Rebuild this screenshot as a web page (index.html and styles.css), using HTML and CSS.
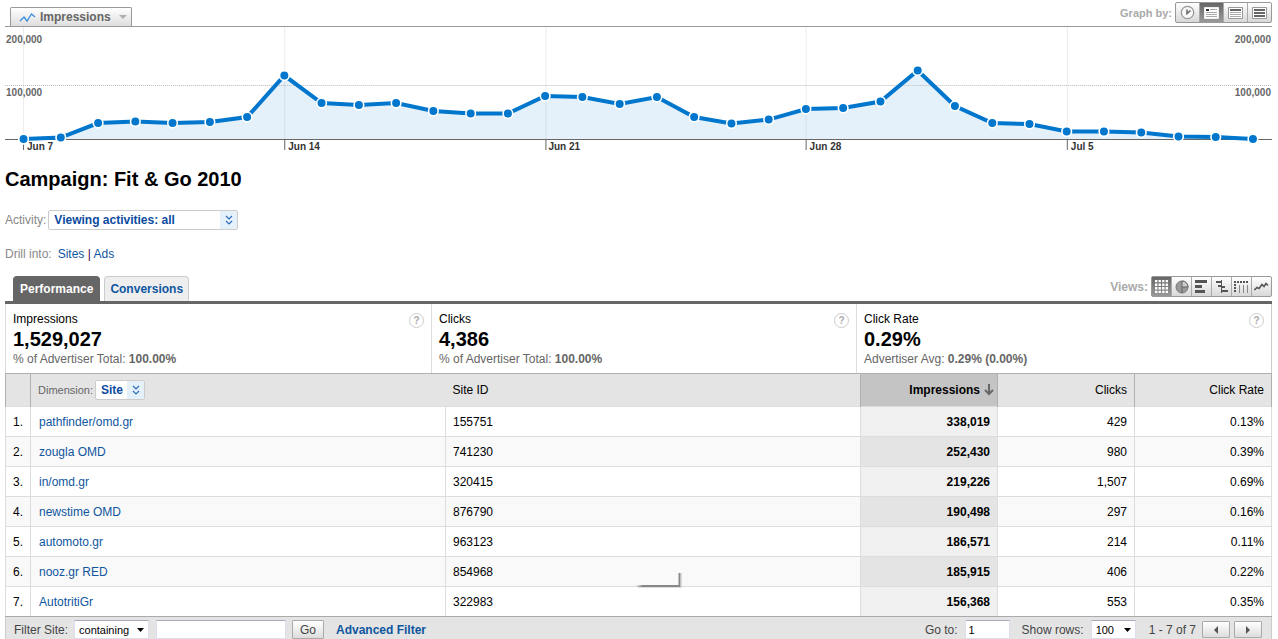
FILE: index.html
```
<!DOCTYPE html>
<html lang="en">
<head>
<meta charset="utf-8">
<title>Campaign: Fit &amp; Go 2010</title>
<link rel="stylesheet" href="styles.css">
</head>
<body>
<svg class="defs" aria-hidden="true">
  <symbol id="chevrons" viewBox="0 0 8 10"><path d="M1 1l3 3 3-3M1 6l3 3 3-3" fill="none" stroke="#2f6bb5" stroke-width="1.2"/></symbol>
  <symbol id="caret" viewBox="0 0 7 4"><path d="M0 0h7L3.500 4z" fill="#000"/></symbol>
</svg>
<div class="page">
  <div class="graph-bar">
    <button class="metric-tab" type="button">
      <svg width="17" height="11" viewBox="0 0 17 11"><path d="M1 9l4-4 3 4 4.500-7L16 5" fill="none" stroke="#3a8fdc" stroke-width="1.300"/></svg>
      Impressions
      <svg class="drop" width="8" height="4" viewBox="0 0 8 4"><path d="M0 0h8L4 4z" fill="#b0b0b0"/></svg>
    </button>
    <div class="tool-group">
      <span class="tool-label graph-label">Graph by:</span>
      <div class="tools graph-tools">
        <button type="button" aria-label="Hour"><svg width="15" height="15" viewBox="0 0 15 15"><circle cx="7.500" cy="7.500" r="6.200" fill="#f8f8f8" stroke="#999" stroke-width="1.300"/><path d="M7 4.500v4l3.500-3" fill="none" stroke="#666" stroke-width="1.500"/></svg></button>
        <button type="button" class="on" aria-label="Day"><svg width="15" height="12" viewBox="0 0 15 12"><path d="M.5.5h14v11H.5z" fill="#fff" stroke="#eee"/><path d="M2 2h3v2H2z" fill="#333"/><path d="M6 2.500h7M2 5.500h11M2 7.500h11M2 9.500h11" stroke="#aaa"/></svg></button>
        <button type="button" aria-label="Week"><svg width="15" height="12" viewBox="0 0 15 12"><path d="M.5.5h14v11H.5z" fill="#fff" stroke="#999"/><path d="M2 3h11" stroke="#666" stroke-width="2"/><path d="M2 5.500h11M2 7.500h11M2 9.500h11" stroke="#aaa"/></svg></button>
        <button type="button" aria-label="Month"><svg width="15" height="12" viewBox="0 0 15 12"><path d="M.5.5h14v11H.5z" fill="#fff" stroke="#999"/><path d="M2 3h11M2 6h11M2 9h11" stroke="#666" stroke-width="2"/></svg></button>
      </div>
    </div>
  </div>

  <svg class="chart" viewBox="5 27 1266 128" role="img" aria-label="Impressions by day">
    <defs>
      <marker id="dot" markerUnits="userSpaceOnUse" markerWidth="12" markerHeight="12" refX="6" refY="6"><circle cx="6" cy="6" r="4.800" fill="#0077cc" stroke="#fff" stroke-width="1.600"/></marker>
    </defs>
    <path class="area" d="M23.500 139L60.700 137.500 98 123 135.200 121.500 172.400 123 209.700 122 246.900 117 284.100 75.500 321.300 103 358.600 105 395.800 103 433 111 470.300 113.500 507.500 113.500 544.700 96 581.900 97 619.200 104 656.400 97 693.600 117 730.900 123.500 768.100 119.500 805.300 109 842.500 108 879.800 101.500 917 70.500 954.200 106 991.500 123 1028.700 124 1065.900 131.500 1103.100 131.500 1140.400 132.500 1177.600 136.500 1214.800 137 1252 139z"/>
    <path class="grid" d="M23.500 27V139M284.500 27V139M545.500 27V139M805.500 27V139M1066.500 27V139"/>
    <path class="dotted" d="M5 85.500H1271"/>
    <path class="axis" d="M5 139.500H1271M23.500 139V150M284.500 139V150M545.500 139V150M805.500 139V150M1066.500 139V150"/>
    <g class="scale">
      <text x="6" y="43">200,000</text><text x="6" y="96">100,000</text>
      <text x="1270" y="43" text-anchor="end">200,000</text><text x="1270" y="96" text-anchor="end">100,000</text>
    </g>
    <g class="dates">
      <text x="27" y="150">Jun 7</text><text x="288" y="150">Jun 14</text><text x="548" y="150">Jun 21</text><text x="809" y="150">Jun 28</text><text x="1070" y="150">Jul 5</text>
    </g>
    <polyline class="series" points="23.500,139 60.700,137.500 98,123 135.200,121.500 172.400,123 209.700,122 246.900,117 284.100,75.500 321.300,103 358.600,105 395.800,103 433,111 470.300,113.500 507.500,113.500 544.700,96 581.900,97 619.200,104 656.400,97 693.600,117 730.900,123.500 768.100,119.500 805.300,109 842.500,108 879.800,101.500 917,70.500 954.200,106 991.500,123 1028.700,124 1065.900,131.500 1103.100,131.500 1140.400,132.500 1177.600,136.500 1214.800,137 1252,139"/>
  </svg>

  <h1>Campaign: Fit &amp; Go 2010</h1>

  <div class="line activity">
    <label for="activity">Activity:</label>
    <span class="pick pick-wide">
      <select id="activity"><option>Viewing activities: all</option></select>
      <span class="pick-end"><svg width="8" height="10"><use href="#chevrons"/></svg></span>
    </span>
  </div>
  <div class="line drill"><span>Drill into:</span> <span class="drill-links"><a href="#">Sites</a> | <a href="#">Ads</a></span></div>

  <div class="tab-bar">
    <nav class="tabs"><a class="tab active" href="#">Performance</a><a class="tab" href="#">Conversions</a></nav>
    <div class="tool-group">
      <span class="tool-label">Views:</span>
      <div class="tools view-tools">
        <button type="button" class="on" aria-label="Table"><svg width="13" height="13" viewBox="1 0 11 11"><path d="M2 0v11M5 0v11M8 0v11M11 0v11" stroke="#fff" stroke-width="2" stroke-dasharray="2 1"/></svg></button>
        <button type="button" aria-label="Percentage"><svg width="14" height="14" viewBox="0 0 14 14"><circle cx="7" cy="7" r="6" fill="#999" stroke="#777"/><path d="M7 7V1a6 6 0 0 1 6 6z" fill="#ccc" stroke="#666"/><path d="M7 7v6" stroke="#666"/></svg></button>
        <button type="button" aria-label="Performance bars"><svg width="13" height="13" viewBox="0 0 13 13"><path d="M0 1.500h12M0 6.500h7M0 11.500h10" stroke="#555" stroke-width="3"/></svg></button>
        <button type="button" aria-label="Comparison"><svg width="13" height="13" viewBox="0 0 13 13"><path d="M6.500 0v13" stroke="#555"/><path d="M1 2h5M3 6h4M6 7h4M7 11h6" stroke="#555" stroke-width="2"/></svg></button>
        <button type="button" aria-label="Pivot"><svg width="15" height="12" viewBox="0 0 15 12"><path d="M0 1h15" stroke="#555" stroke-width="2" stroke-dasharray="2 1"/><path d="M1 3v9" stroke="#555" stroke-width="2" stroke-dasharray="2 1"/><path d="M5.500 4v8M9.500 4v8M13.500 4v8" stroke="#888"/></svg></button>
        <button type="button" aria-label="Trend"><svg width="15" height="9" viewBox="0 0 15 9"><path d="M0 7.500h1l2-2 2 1 3-4 2 2 2-3 2 2" fill="none" stroke="#555" stroke-width="1.500"/></svg></button>
      </div>
    </div>
  </div>

  <section class="summary">
    <div class="stat"><div class="stat-head">Impressions<button class="help" type="button">?</button></div><strong class="value">1,529,027</strong><div class="note">% of Advertiser Total: <b>100.00%</b></div></div>
    <div class="stat"><div class="stat-head">Clicks<button class="help" type="button">?</button></div><strong class="value">4,386</strong><div class="note">% of Advertiser Total: <b>100.00%</b></div></div>
    <div class="stat"><div class="stat-head">Click Rate<button class="help" type="button">?</button></div><strong class="value">0.29%</strong><div class="note">Advertiser Avg: <b>0.29% (0.00%)</b></div></div>
  </section>

  <div class="report">
    <table>
      <colgroup><col class="c-num"><col><col><col class="c-val"><col class="c-val"><col class="c-val"></colgroup>
      <thead>
        <tr>
          <th></th>
          <th><div class="dimension"><label for="dimension">Dimension:</label><span class="pick pick-site"><select id="dimension"><option>Site</option></select><span class="pick-end"><svg width="8" height="10"><use href="#chevrons"/></svg></span></span></div></th>
          <th class="site-id">Site ID</th>
          <th class="num sorted"><span class="sort">Impressions <svg width="10" height="12" viewBox="0 0 10 12"><path d="M5 0v10M1 6l4 4 4-4" fill="none" stroke="#666" stroke-width="2"/></svg></span></th>
          <th class="num">Clicks</th>
          <th class="num">Click Rate</th>
        </tr>
      </thead>
      <tbody>
        <tr><td>1.</td><td><a href="#">pathfinder/omd.gr</a></td><td>155751</td><td class="num sorted">338,019</td><td class="num">429</td><td class="num">0.13%</td></tr>
        <tr><td>2.</td><td><a href="#">zougla OMD</a></td><td>741230</td><td class="num sorted">252,430</td><td class="num">980</td><td class="num">0.39%</td></tr>
        <tr><td>3.</td><td><a href="#">in/omd.gr</a></td><td>320415</td><td class="num sorted">219,226</td><td class="num">1,507</td><td class="num">0.69%</td></tr>
        <tr><td>4.</td><td><a href="#">newstime OMD</a></td><td>876790</td><td class="num sorted">190,498</td><td class="num">297</td><td class="num">0.16%</td></tr>
        <tr><td>5.</td><td><a href="#">automoto.gr</a></td><td>963123</td><td class="num sorted">186,571</td><td class="num">214</td><td class="num">0.11%</td></tr>
        <tr><td>6.</td><td><a href="#">nooz.gr RED</a></td><td>854968</td><td class="num sorted">185,915</td><td class="num">406</td><td class="num">0.22%</td></tr>
        <tr><td>7.</td><td><a href="#">AutotritiGr</a></td><td>322983</td><td class="num sorted">156,368</td><td class="num">553</td><td class="num">0.35%</td></tr>
      </tbody>
    </table>
    <svg class="popup-edge" width="48" height="20" viewBox="0 0 48 20" aria-hidden="true">
      <defs><linearGradient id="fade"><stop offset="0" stop-color="#888" stop-opacity="0"/><stop offset=".15" stop-color="#888"/></linearGradient></defs>
      <path d="M44.500 3V17" stroke="#888" stroke-width="2"/><path d="M46.500 3V18" stroke="#ddd"/>
      <path d="M1 15h44v2H1z" fill="url(#fade)"/><path d="M3 17.500h43" stroke="#ddd"/>
    </svg>
  </div>

  <form class="filter-bar">
    <label class="filter-label" for="mode">Filter Site:</label>
    <span class="menu menu-mode"><select id="mode"><option>containing</option></select><svg width="7" height="4"><use href="#caret"/></svg></span>
    <input class="box term" type="text" aria-label="Filter text">
    <button class="btn go" type="button">Go</button>
    <a class="advanced" href="#">Advanced Filter</a>
    <div class="pager">
      <label for="goto">Go to:</label>
      <input class="box goto" id="goto" type="text" value="1">
      <label for="rows">Show rows:</label>
      <span class="menu menu-rows"><select id="rows"><option>100</option></select><svg width="7" height="4"><use href="#caret"/></svg></span>
      <span class="range">1 - 7 of 7</span>
      <button class="btn step" type="button" aria-label="Previous"><svg width="4" height="8" viewBox="0 0 4 8"><path d="M4 0v8L0 4z" fill="#555"/></svg></button>
      <button class="btn step" type="button" aria-label="Next"><svg width="4" height="8" viewBox="0 0 4 8"><path d="M0 0v8l4-4z" fill="#555"/></svg></button>
    </div>
  </form>
</div>
</body>
</html>
```
FILE: styles.css
```
* { box-sizing: border-box; }
body { margin: 0; background: #fff; color: #000; font: 12px/16px "Liberation Sans", Arial, sans-serif; }
.page { padding: 0 6px 0 5px; }
button, input, select { font: inherit; color: inherit; margin: 0; }
button { padding: 0; cursor: pointer; }
svg { display: block; flex: none; }
a { color: #0f569f; text-decoration: none; }
.defs { position: absolute; width: 0; height: 0; }

.graph-bar { display: flex; justify-content: space-between; align-items: flex-end; height: 27px; border-bottom: 1px solid #999; }
.metric-tab { display: flex; align-items: center; gap: 4px; width: 122px; height: 19px; margin-left: 5px; padding: 0 4px 0 8px; border: 1px solid #999; border-bottom: 0; border-radius: 2px 2px 0 0; background: linear-gradient(#fff, #dedede); color: #666; font-weight: bold; }
.drop { margin-left: auto; }
.tool-group { display: flex; align-items: center; gap: 3px; }
.graph-bar .tool-group { padding-bottom: 3px; }
.tool-label { color: #aaa; font-weight: bold; }
.graph-label { font-size: 11px; }
.tools { display: flex; border: 1px solid #999; border-radius: 2px; background: linear-gradient(#fff, #d8d8d8); }
.tools button { display: flex; align-items: center; justify-content: center; width: 24px; height: 19px; border: 0; border-left: 1px solid #aaa; background: none; }
.tools button:first-child { width: 23px; border-left: 0; }
.tools .on { background: linear-gradient(#666, #999); }
.view-tools button { width: 20px; }
.view-tools button:first-child { width: 19px; }

.chart { width: 100%; height: auto; }
.area { fill: #0077cc; fill-opacity: .1; }
.grid { fill: none; stroke: #000; stroke-opacity: .08; }
.dotted { fill: none; stroke: #bbb; stroke-dasharray: 1 1; }
.axis { fill: none; stroke: #666; }
.series { fill: none; stroke: #0077cc; stroke-width: 4; marker-start: url(#dot); marker-mid: url(#dot); marker-end: url(#dot); }
.scale text, .dates text { font-size: 10px; font-weight: bold; fill: #666; }
.dates text { fill: #333; }

h1 { margin: 12px 0 0; font-size: 20px; line-height: 24px; }
.line { display: flex; align-items: center; color: #888; }
.activity { gap: 2px; margin-top: 19px; }
.drill { gap: 6px; margin-top: 16px; }
.drill-links { color: #404; }
.pick { display: flex; position: relative; border: 1px solid #ccc; border-radius: 2px; background: #fff; }
.pick select { appearance: none; width: 100%; height: 18px; padding: 0 18px 0 5px; border: 0; background: none; color: #0b4ba0; font-weight: bold; line-height: 16px; }
.pick-end { position: absolute; top: 0; right: 0; bottom: 0; display: flex; align-items: center; justify-content: center; width: 17px; background: #e4f0fa; pointer-events: none; }
.pick-wide { width: 190px; }
.pick-site { width: 50px; }

.tab-bar { display: flex; justify-content: space-between; align-items: flex-start; height: 42px; padding-top: 14px; border-bottom: 3px solid #666; }
.tabs { display: flex; gap: 4px; padding-left: 8px; }
.tab { height: 25px; padding: 0 5px; border: 1px solid #ccc; border-bottom: 0; border-radius: 4px 4px 0 0; background: #eee; font-weight: bold; line-height: 24px; }
.tab.active { padding: 0 6px; border-color: #666; background: #666; color: #fff; }

.summary { display: grid; grid-template-columns: 426fr 425fr 415fr; border-right: 1px solid #ccc; }
.stat { height: 69px; padding: 7px 7px 0; border-left: 1px solid #ddd; }
.stat-head { display: flex; justify-content: space-between; height: 17px; }
.help { width: 15px; height: 15px; margin-top: 2px; border: 1px solid #ccc; border-radius: 50%; background: #fff; color: #aaa; font-size: 10px; font-weight: bold; line-height: 12px; }
.value { display: block; font-size: 20px; line-height: 22px; }
.note { color: #666; line-height: 18px; }

.report { position: relative; }
table { width: 100%; table-layout: fixed; border-collapse: collapse; }
.c-num { width: 25px; }
.c-val { width: 137px; }
th { height: 33px; padding: 0 7px; border: solid #b0b0b0; border-width: 1px 1px 0; background: #e4e4e4; font-weight: normal; text-align: left; }
th.site-id { border-left: 0; }
th:nth-child(2) { border-right: 0; }
td { height: 30px; padding: 0 7px; border: 1px solid #ddd; }
td:nth-child(2) { padding-left: 8px; }
tr:last-child td { border-bottom-color: #aaa; }
tbody tr:nth-child(even) { background: #f9f9f9; }
.num { text-align: right; }
.sorted { font-weight: bold; background: #f0f0f0; }
tbody tr:nth-child(even) .sorted { background: #e4e4e4; }
th.sorted { padding-right: 3px; background: #c4c4c4; }
.sort { display: flex; align-items: center; justify-content: flex-end; gap: 4px; }
.dimension { display: flex; align-items: center; gap: 2px; color: #666; }
.dimension label { font-size: 11px; }
.popup-edge { position: absolute; right: 50%; bottom: 27px; margin-right: -44px; }

.filter-bar { display: flex; align-items: center; height: 23px; padding: 2px 9px 0 8px; background: #e4e4e4; color: #444; border: solid #ccc; border-width: 0 1px; }
.box, .menu { height: 19px; border: 1px solid #dde; border-top-color: #aab; background: #fff; color: #000; font-size: 11px; }
.box { padding: 0 3px; }
.menu { display: flex; align-items: center; position: relative; }
.menu select { appearance: none; width: 100%; padding: 0 14px 0 4px; border: 0; background: none; line-height: 16px; }
.menu svg { position: absolute; right: 4px; pointer-events: none; }
.menu-mode { width: 75px; margin-left: 6px; }
.menu-rows { width: 45px; }
.term { width: 130px; margin-left: 7px; }
.btn { display: flex; align-items: center; justify-content: center; height: 19px; border: 1px solid #aaa; border-radius: 1px; background: linear-gradient(#fff, #ddd); }
.go { width: 32px; margin-left: 6px; }
.advanced { margin-left: 12px; font-weight: bold; }
.pager { display: flex; align-items: center; gap: 7px; margin-left: auto; }
.goto { width: 45px; margin-right: 5px; }
.range { margin-left: 6px; margin-right: -1px; }
.step { width: 28px; height: 17px; }
.step + .step { margin-left: -3px; }
```
